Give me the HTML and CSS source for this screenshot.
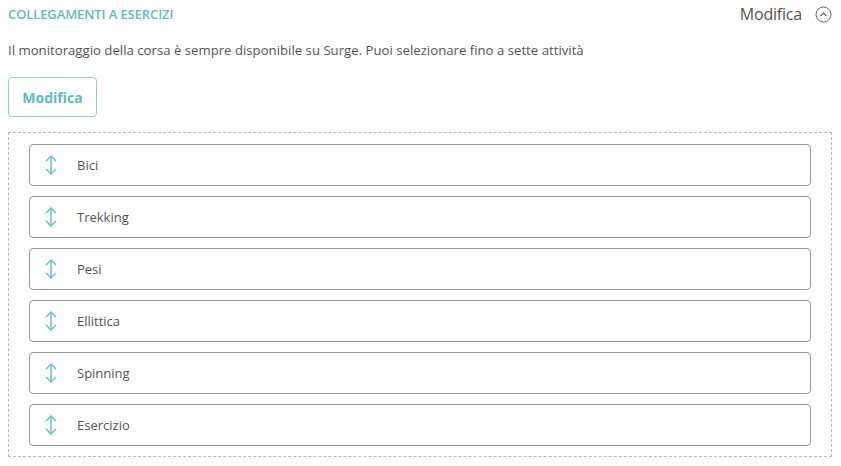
FILE: index.html
```html
<!DOCTYPE html>
<html>
<head>
<meta charset="utf-8">
<link rel="stylesheet" href="styles.css">
</head>
<body>
<div class="panel">
  <div class="header">
    <div class="title">COLLEGAMENTI A ESERCIZI</div>
    <div class="header-right">
      <span class="edit-link">Modifica</span>
      <svg class="chev" width="17" height="17" viewBox="0 0 17 17"><circle cx="8.5" cy="8.5" r="7.5" fill="none" stroke="#666" stroke-width="1"/><path d="M5.5 10 L8.5 7 L11.5 10" fill="none" stroke="#666" stroke-width="1.1"/></svg>
    </div>
  </div>
  <p class="desc">Il monitoraggio della corsa è sempre disponibile su Surge. Puoi selezionare fino a sette attività</p>
  <button class="btn">Modifica</button>
  <div class="list">
    <div class="item"><svg class="drag" width="16" height="22" viewBox="0 0 16 22"><path d="M8 2 V20 M3 7 L8 2 L13 7 M3 15 L8 20 L13 15" fill="none" stroke="#6cc4c4" stroke-width="1.5"/></svg><span>Bici</span></div>
    <div class="item"><svg class="drag" width="16" height="22" viewBox="0 0 16 22"><path d="M8 2 V20 M3 7 L8 2 L13 7 M3 15 L8 20 L13 15" fill="none" stroke="#6cc4c4" stroke-width="1.5"/></svg><span>Trekking</span></div>
    <div class="item"><svg class="drag" width="16" height="22" viewBox="0 0 16 22"><path d="M8 2 V20 M3 7 L8 2 L13 7 M3 15 L8 20 L13 15" fill="none" stroke="#6cc4c4" stroke-width="1.5"/></svg><span>Pesi</span></div>
    <div class="item"><svg class="drag" width="16" height="22" viewBox="0 0 16 22"><path d="M8 2 V20 M3 7 L8 2 L13 7 M3 15 L8 20 L13 15" fill="none" stroke="#6cc4c4" stroke-width="1.5"/></svg><span>Ellittica</span></div>
    <div class="item"><svg class="drag" width="16" height="22" viewBox="0 0 16 22"><path d="M8 2 V20 M3 7 L8 2 L13 7 M3 15 L8 20 L13 15" fill="none" stroke="#6cc4c4" stroke-width="1.5"/></svg><span>Spinning</span></div>
    <div class="item"><svg class="drag" width="16" height="22" viewBox="0 0 16 22"><path d="M8 2 V20 M3 7 L8 2 L13 7 M3 15 L8 20 L13 15" fill="none" stroke="#6cc4c4" stroke-width="1.5"/></svg><span>Esercizio</span></div>
  </div>
</div>
</body>
</html>
```
FILE: styles.css
```css
html, body { margin: 0; padding: 0; background: #fff; }
body { font-family: "Open Sans", "Liberation Sans", sans-serif; color: #555; }
.panel { padding: 4px 9px 0 8px; }
.header { display: flex; justify-content: space-between; align-items: center; height: 20px; }
.title { font-size: 13px; color: #5fbcbf; letter-spacing: -0.1px; font-weight: 600; }
.header-right { display: flex; align-items: center; gap: 13px; }
.edit-link { font-size: 16px; color: #555; letter-spacing: -0.2px; }
.chev { display: block; margin-right: 0; }
.desc { margin: 18px 0 0; font-size: 13.2px; color: #555; letter-spacing: 0; line-height: 16px; }
.btn { display: block; margin-top: 19px; width: 89px; height: 40px; border: 1px solid #8fd0d2; border-radius: 4px; background: #fff; color: #5fbcbf; font-family: "Open Sans", "Liberation Sans", sans-serif; font-weight: 700; font-size: 14px; padding: 0; }
.list { margin-top: 15px; border: 1px dashed #bbb; padding: 11px 20px 10px 20px; display: flex; flex-direction: column; gap: 10px; }
.item { height: 40px; border: 1px solid #999; border-radius: 4px; display: flex; align-items: center; padding-left: 13px; font-size: 13px; color: #555; }
.drag { display: block; margin-right: 18px; }
```
